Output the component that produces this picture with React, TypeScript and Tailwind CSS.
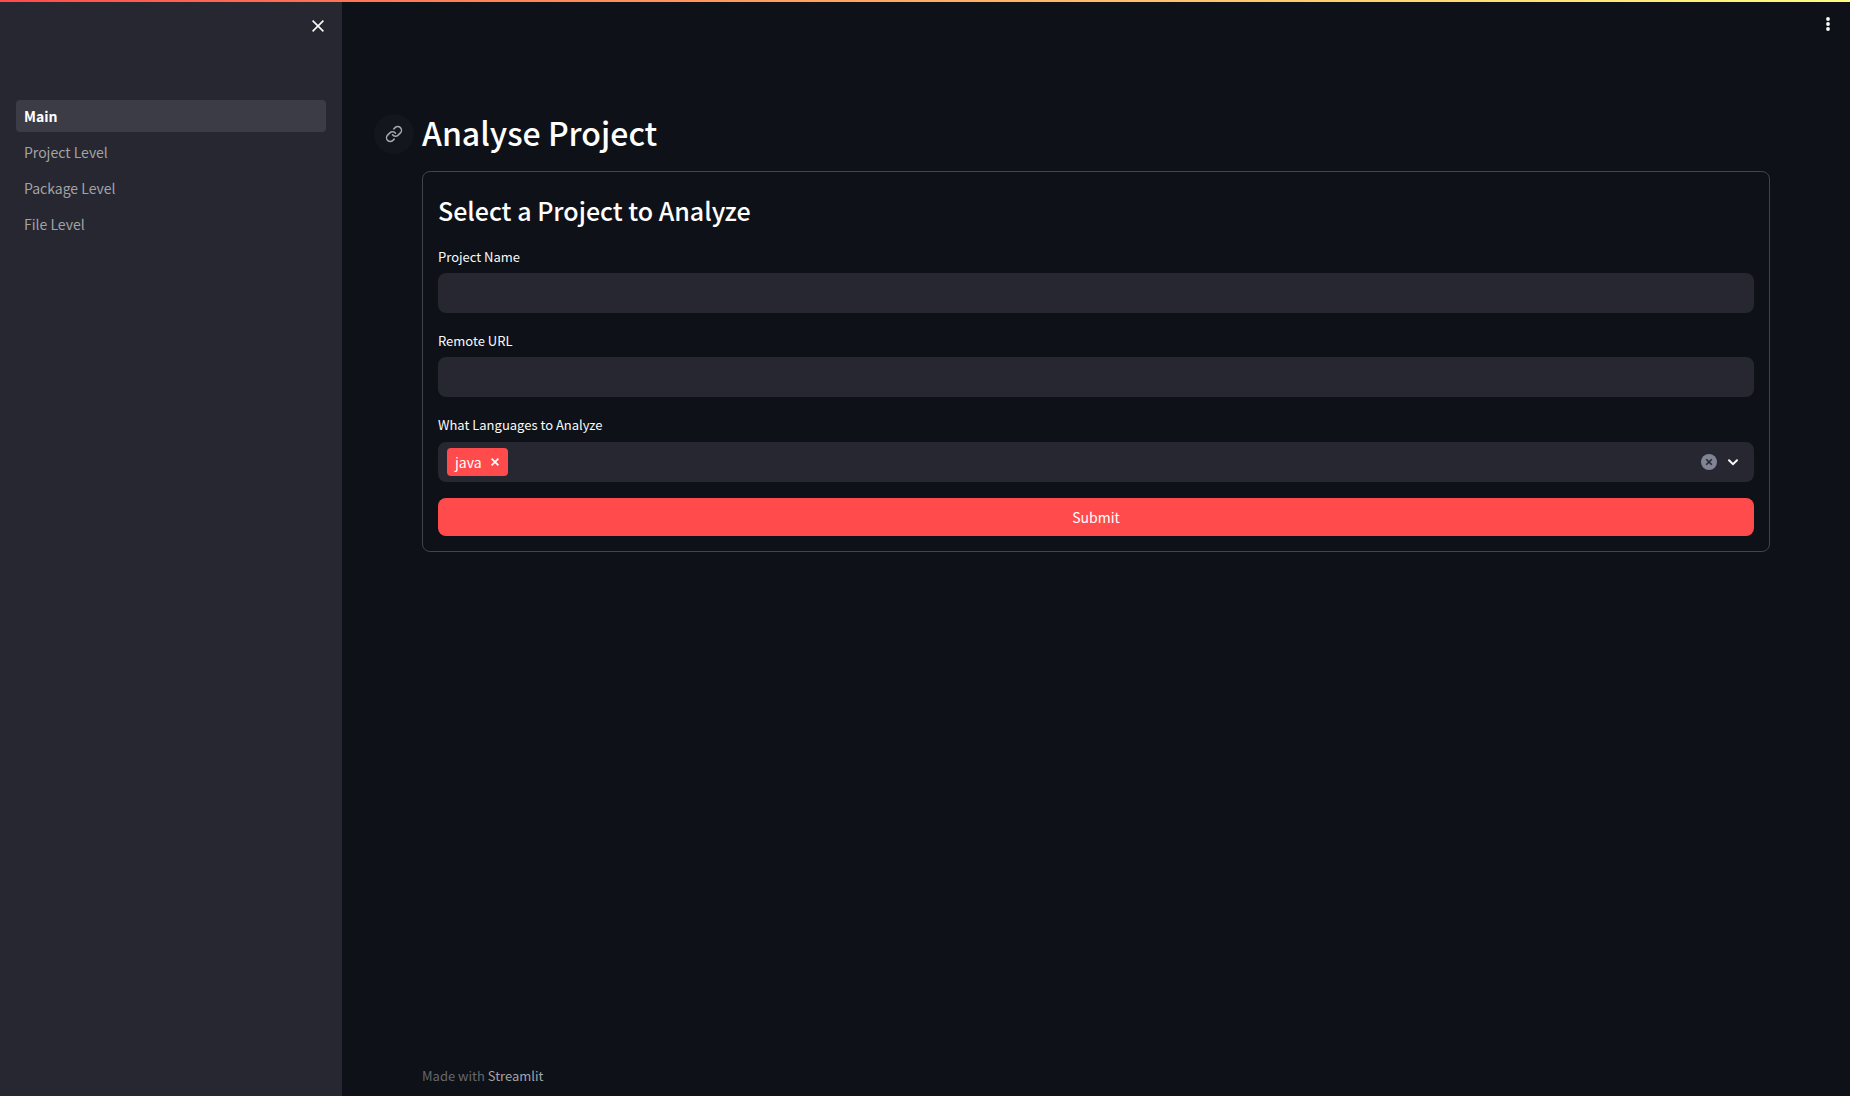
import { useState } from "react";

const pages = ["Main", "Project Level", "Package Level", "File Level"];

function CloseIcon() {
  return (
    <svg viewBox="0 0 12 12" className="size-3" fill="none" stroke="currentColor" strokeWidth="1.6" aria-hidden="true">
      <path d="M.6.6l10.8 10.8M11.4.6L.6 11.4" />
    </svg>
  );
}

function LinkIcon() {
  return (
    <svg viewBox="0 0 24 24" className="size-[18px]" fill="none" stroke="currentColor" strokeWidth="2" strokeLinecap="round" strokeLinejoin="round" aria-hidden="true">
      <path d="M10 13a5 5 0 0 0 7.54.54l3-3a5 5 0 0 0-7.07-7.07l-1.72 1.71" />
      <path d="M14 11a5 5 0 0 0-7.54-.54l-3 3a5 5 0 0 0 7.07 7.07l1.71-1.71" />
    </svg>
  );
}

function Sidebar() {
  return (
    <aside className="flex w-[342px] shrink-0 flex-col bg-[#262730]">
      <div className="flex h-[100px] items-start justify-end px-[10px]">
        <button type="button" aria-label="Close sidebar" className="mt-3 flex size-7 items-center justify-center text-[#fafafa]">
          <CloseIcon />
        </button>
      </div>
      <nav className="px-4">
        <ul className="flex flex-col gap-1">
          {pages.map((page, i) => (
            <li key={page}>
              <a
                href="#"
                aria-current={i === 0 ? "page" : undefined}
                className={
                  i === 0
                    ? "flex h-8 items-center rounded bg-[#3c3c47] px-2 font-bold text-white"
                    : "flex h-8 items-center rounded px-2 text-[#a3a3a6]"
                }
              >
                {page}
              </a>
            </li>
          ))}
        </ul>
      </nav>
    </aside>
  );
}

function TextField({ id, label }: { id: string; label: string }) {
  return (
    <div className="flex flex-col">
      <label htmlFor={id} className="mb-1 h-6 text-[13px] leading-6">{label}</label>
      <input id={id} type="text" className="h-10 w-full rounded-lg bg-[#262730] px-3 outline-none" />
    </div>
  );
}

function LanguageSelect() {
  const [languages, setLanguages] = useState(["java"]);
  return (
    <div className="flex flex-col">
      <label htmlFor="languages" className="mb-[5px] h-6 text-[13px] leading-6">What Languages to Analyze</label>
      <div className="flex h-10 items-center rounded-lg bg-[#262730] px-[9px]">
        {languages.map((language) => (
          <span key={language} className="flex h-7 items-center gap-2 rounded bg-[#ff4b4b] px-2 text-white">
            {language}
            <button
              type="button"
              aria-label={`Remove ${language}`}
              onClick={() => setLanguages(languages.filter((l) => l !== language))}
              className="flex h-7 w-[10px] items-center justify-center"
            >
              <svg viewBox="0 0 8 8" className="size-2" fill="none" stroke="currentColor" strokeWidth="1.7" aria-hidden="true">
                <path d="M.6.6l6.8 6.8M7.4.6L.6 7.4" />
              </svg>
            </button>
          </span>
        ))}
        <input id="languages" type="text" role="combobox" aria-expanded="false" className="h-8 min-w-0 flex-1 bg-transparent px-2 outline-none" />
        <button type="button" aria-label="Clear all" onClick={() => setLanguages([])} className="flex size-6 items-center justify-center">
          <svg viewBox="0 0 16 16" className="size-4" aria-hidden="true">
            <circle cx="8" cy="8" r="8" fill="#808495" />
            <path d="M5.2 5.2l5.6 5.6M10.8 5.2l-5.6 5.6" stroke="#262730" strokeWidth="1.6" />
          </svg>
        </button>
        <button type="button" aria-label="Open" className="flex size-6 items-center justify-center text-[#fafafa]">
          <svg viewBox="0 0 12 8" className="h-2 w-3" fill="none" stroke="currentColor" strokeWidth="2" strokeLinecap="round" aria-hidden="true">
            <path d="M2 2.2l4 4 4-4" />
          </svg>
        </button>
      </div>
    </div>
  );
}

export default function App() {
  return (
    <div className="relative flex min-h-screen bg-[#0e1117] font-['Source_Sans_Pro','Noto_Sans_CJK_SC',sans-serif] text-[14px] leading-6 text-[#fafafa]">
      <div className="absolute inset-x-0 top-0 z-10 h-0.5 bg-linear-to-r from-[#ff4b4b] to-[#fffd80]" />
      <Sidebar />
      <div className="relative flex min-w-0 flex-1 flex-col px-20 pt-24">
        <button type="button" aria-label="Main menu" className="absolute top-3 right-[10px] flex size-6 items-center justify-center text-[#fafafa]">
          <svg viewBox="0 0 4 14" className="h-[14px] w-1" fill="currentColor" aria-hidden="true">
            <circle cx="2" cy="2" r="1.9" />
            <circle cx="2" cy="7" r="1.9" />
            <circle cx="2" cy="12" r="1.9" />
          </svg>
        </button>
        <main className="flex-1">
          <div className="-ml-12 flex h-[75px] items-center gap-2">
            <a href="#analyse-project" aria-label="Link to heading" className="flex size-10 items-center justify-center rounded-full bg-[#13161c] text-[#a3a8b0]">
              <LinkIcon />
            </a>
            <h1 id="analyse-project" className="pb-1 text-[32px] leading-[48px] font-medium text-white">Analyse Project</h1>
          </div>
          <form className="flex flex-col gap-4 rounded-lg border border-[#41444a] p-[15px]" onSubmit={(e) => e.preventDefault()}>
            <h2 className="h-[42px] pt-[7px] text-[25px] leading-8 font-medium text-white">Select a Project to Analyze</h2>
            <TextField id="project-name" label="Project Name" />
            <TextField id="remote-url" label="Remote URL" />
            <LanguageSelect />
            <button type="submit" className="h-[38px] w-full rounded-lg bg-[#ff4b4b] text-white">Submit</button>
          </form>
        </main>
        <footer className="flex h-8 items-start text-[13px] text-[#66686d]">
          <p>
            Made with <a href="#" className="text-[#a3a5a8]">Streamlit</a>
          </p>
        </footer>
      </div>
    </div>
  );
}
